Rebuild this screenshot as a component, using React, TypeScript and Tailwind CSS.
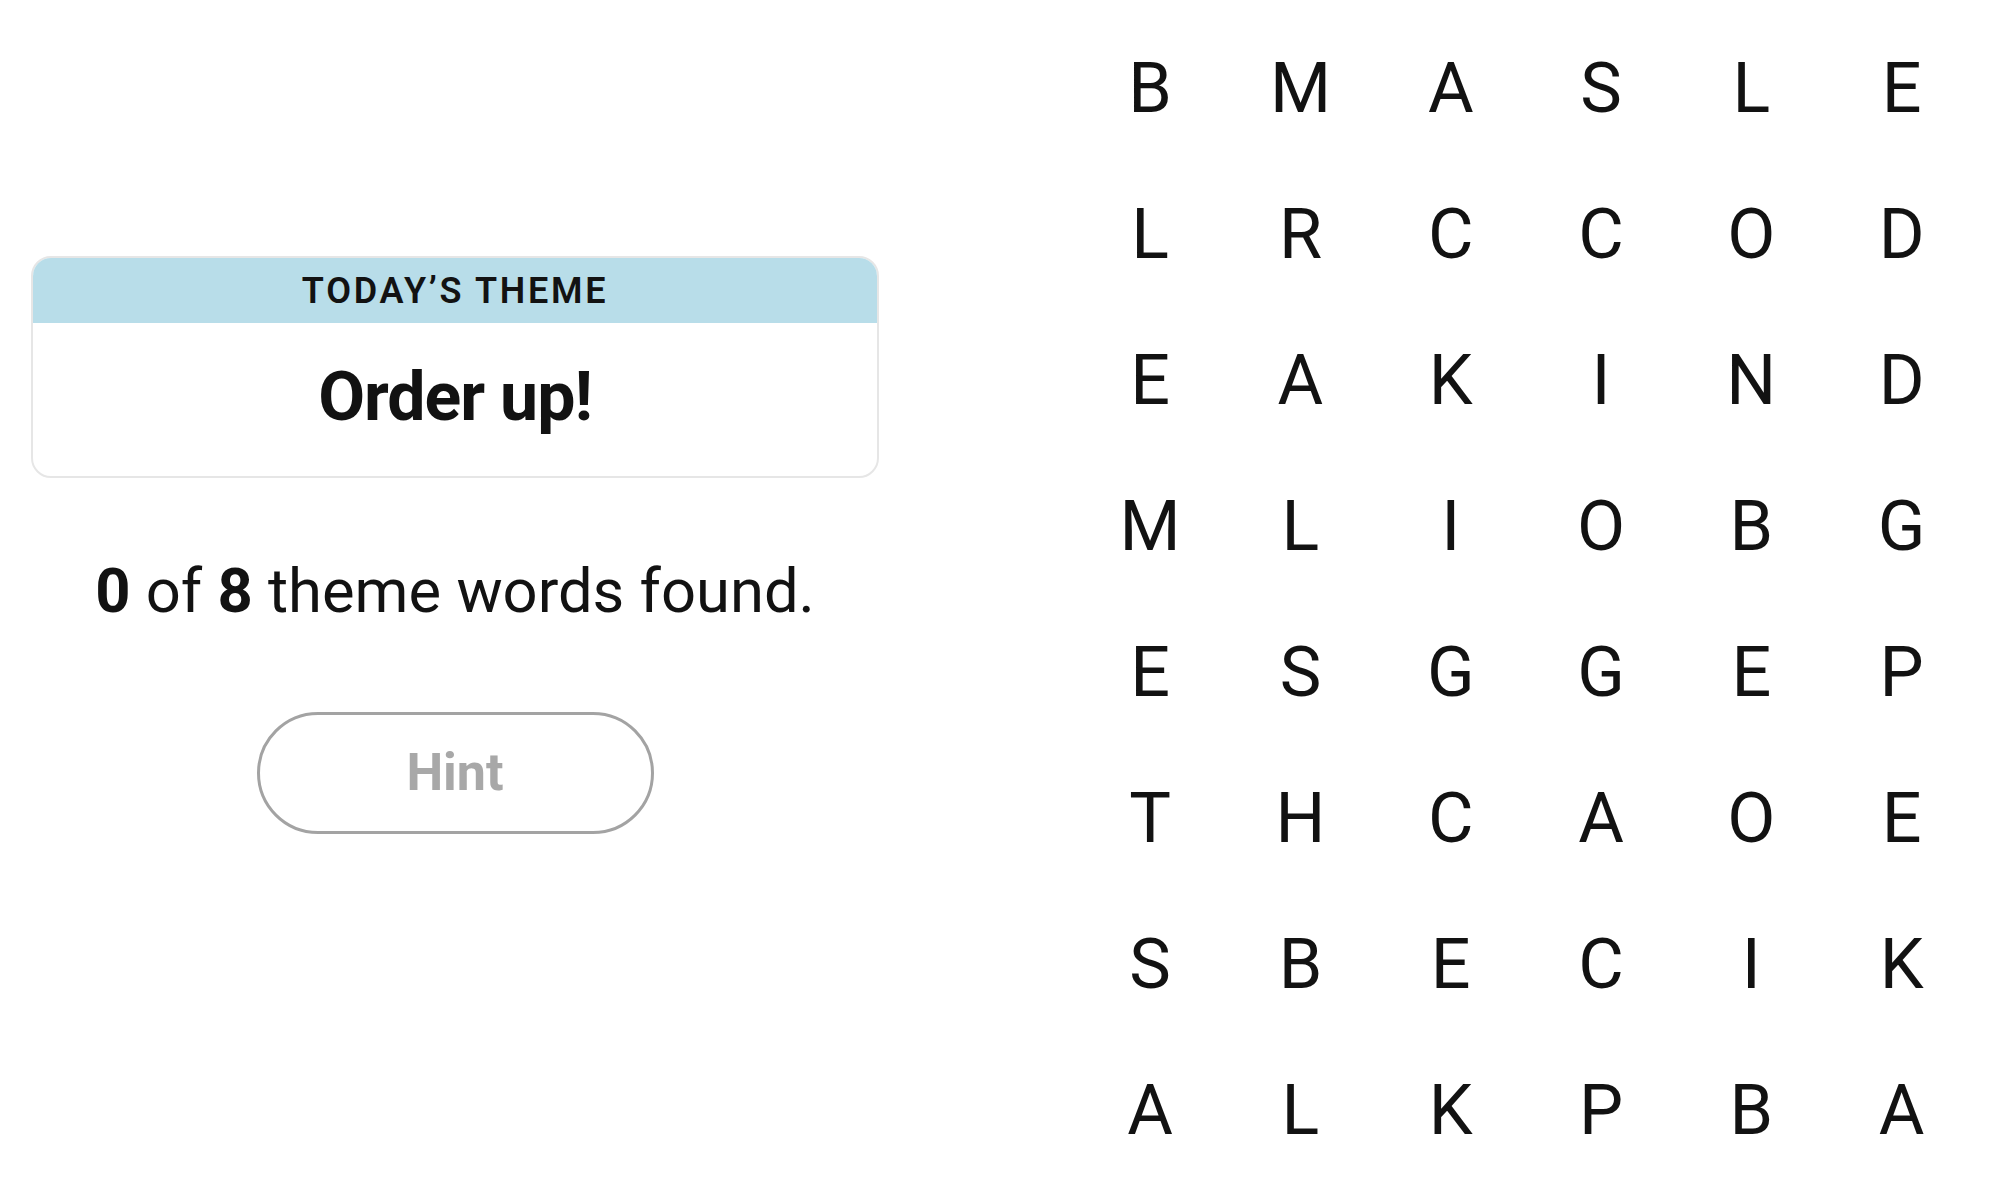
const LETTERS = [
  'BMASLE',
  'LRCCOD',
  'EAKIND',
  'MLIOBG',
  'ESGGEP',
  'THCAOE',
  'SBECIK',
  'ALKPBA',
]

export default function App() {
  return (
    <div className="w-[2000px] h-[1196px] bg-white flex font-['Roboto','Liberation_Sans',sans-serif] text-[#121212] overflow-hidden">
      {/* left panel */}
      <div className="w-[848px] ml-[31px] pt-[256px] flex flex-col items-center">
        <div className="w-full rounded-[20px] border-2 border-[#e6e6e6] overflow-hidden">
          <div className="h-[65px] bg-[#b8dde9] flex items-center justify-center text-[36px] font-semibold tracking-[2.7px] uppercase">
            Today’s Theme
          </div>
          <div className="h-[153px] pb-[6px] flex items-center justify-center text-[68px] font-bold tracking-[-1px]">
            Order up!
          </div>
        </div>

        <p className="mt-[77px] h-[72px] leading-[72px] text-[61.5px]">
          <span className="font-bold">0</span> of <span className="font-bold">8</span> theme words found.
        </p>

        <button className="mt-[85px] w-[397px] h-[122px] rounded-full border-[3px] border-[#a3a3a3] text-[52px] font-bold text-[#a8a8a8] flex items-center justify-center">
          Hint
        </button>
      </div>

      {/* letter grid */}
      <div className="ml-[196px] pt-[15px] grid grid-cols-[repeat(6,150.3px)] auto-rows-[146px]">
        {LETTERS.flatMap((row, r) =>
          row.split('').map((ch, c) => (
            <div key={`${r}-${c}`} className="flex items-center justify-center text-[70px] font-normal">
              {ch}
            </div>
          ))
        )}
      </div>
    </div>
  )
}
